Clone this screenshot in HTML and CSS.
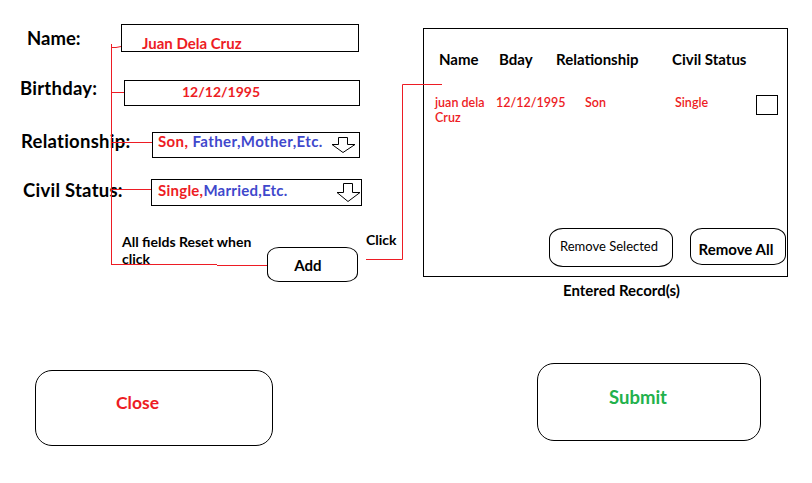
FILE: index.html
```html
<!DOCTYPE html>
<html>
<head>
<meta charset="utf-8">
<link rel="stylesheet" href="styles.css">
</head>
<body>
<div class="canvas">
  <div class="top">
    <div class="form">
      <div class="row row-name">
        <div class="label">Name:</div>
        <div class="field"><span class="red">Juan Dela Cruz</span></div>
      </div>
      <div class="row row-bday">
        <div class="label">Birthday:</div>
        <div class="field"><span class="red">12/12/1995</span></div>
      </div>
      <div class="row row-rel">
        <div class="label">Relationship:</div>
        <div class="field select">
          <span><span class="red">Son,</span> <span class="blue">Father,Mother,Etc.</span></span>
          <svg class="arrow" width="25" height="16" viewBox="0 0 25 16"><path d="M7.5 0.5 H16.5 V7.5 H24 L12 15.5 L1 7.5 H7.5 Z" fill="#fff" stroke="#000" stroke-width="1"/></svg>
        </div>
      </div>
      <div class="row row-civil">
        <div class="label">Civil Status:</div>
        <div class="field select">
          <span><span class="red">Single,</span><span class="blue">Married,Etc.</span></span>
          <svg class="arrow" width="25" height="19" viewBox="0 0 25 19"><path d="M7.5 0.5 H16.5 V9.5 H24 L12 18.5 L1 9.5 H7.5 Z" fill="#fff" stroke="#000" stroke-width="1"/></svg>
        </div>
      </div>
      <div class="action">
        <div class="note">All fields Reset when click</div>
        <div class="btn add">Add</div>
        <div class="click">Click</div>
      </div>
    </div>
    <div class="records-col">
      <div class="records">
        <div class="thead">
          <div class="h h-name">Name</div>
          <div class="h h-bday">Bday</div>
          <div class="h h-rel">Relationship</div>
          <div class="h h-civil">Civil Status</div>
        </div>
        <div class="trow">
          <div class="c c-name">juan dela Cruz</div>
          <div class="c c-bday">12/12/1995</div>
          <div class="c c-rel">Son</div>
          <div class="c c-civil">Single</div>
          <div class="check"></div>
        </div>
        <div class="rbtns">
          <div class="btn rsel">Remove Selected</div>
          <div class="btn rall">Remove All</div>
        </div>
      </div>
      <div class="caption">Entered Record(s)</div>
    </div>
  </div>
  <div class="bottom">
    <div class="bigbtn close">Close</div>
    <div class="bigbtn submit">Submit</div>
  </div>
  <svg class="wires" width="812" height="483" viewBox="0 0 812 483">
    <g stroke="#ed1c24" stroke-width="1" fill="none">
      <path d="M111.5 44 V264.5"/>
      <path d="M111 47.5 H116 L121 46.5"/>
      <path d="M111 92.5 H124"/>
      <path d="M111 142.5 H152"/>
      <path d="M111 189.5 H151"/>
      <path d="M111 264.5 H217 M217 265.5 H267"/>
      <path d="M366 259.5 H402.5 V84.5 H442"/>
    </g>
  </svg>
</div>
</body>
</html>
```
FILE: styles.css
```css
* { box-sizing: border-box; }
html, body { margin: 0; padding: 0; background: #fff; }
body { font-family: Lato, "Open Sans", sans-serif; color: #000; }

.canvas { position: relative; width: 812px; height: 483px; overflow: hidden; }

.red { color: #ed1c24; }
.blue { color: #3f48cc; }

.top { display: flex; align-items: flex-start; height: 299px; }
.form { flex: 0 0 423px; }

.row { display: flex; align-items: flex-start; }
.label { font-size: 18.5px; font-weight: 700; line-height: 22px; letter-spacing: 0.25px; white-space: nowrap; }
.field { border: 1px solid #000; font-weight: 700; line-height: 16px; }

.row-name { margin-top: 24px; }
.row-name .label { margin-left: 27px; width: 94px; margin-top: 3px; letter-spacing: 0; }
.row-name .field { width: 238px; height: 28px; padding: 10px 0 0 20px; font-size: 15px; }

.row-bday { margin-top: 24px; }
.row-bday .label { margin-left: 20px; width: 104px; margin-top: 1px; }
.row-bday .field { margin-top: 4px; width: 236px; height: 26px; padding: 3px 0 0 57px; font-size: 14px; }

.row-rel { margin-top: 23px; }
.row-rel .label { margin-left: 21px; width: 131px; margin-top: 1px; }
.row-rel .field { margin-top: 3px; width: 208px; height: 26px; padding: 0 3px 0 5px; font-size: 15px; letter-spacing: 0.4px; }
.row-rel .arrow { margin-top: 4px; }

.row-civil { margin-top: 20px; }
.row-civil .label { margin-left: 23px; width: 128px; margin-top: 1px; }
.row-civil .field { margin-top: 1px; width: 211px; height: 27px; padding: 2px 0 0 6px; font-size: 15px; letter-spacing: 0.25px; }
.row-civil .arrow { margin-top: 1px; }

.select { display: flex; align-items: flex-start; }
.select .arrow { margin-left: auto; flex: none; }

.action { display: flex; align-items: flex-start; margin-top: 27px; }
.note { margin-left: 122px; width: 145px; font-size: 14px; font-weight: 700; line-height: 17px; }
.btn { border: 1px solid #000; display: flex; justify-content: center; background: #fff; }
.add { margin-top: 14px; width: 91px; height: 35px; border-radius: 12px / 9px; font-size: 15px; font-weight: 700; padding: 8px 9px 0 0; line-height: 18px; }
.click { margin-left: 8px; margin-top: -2px; font-size: 14px; font-weight: 700; line-height: 17px; }

.records-col { flex: 0 0 365px; }
.records { margin-top: 28px; width: 365px; height: 249px; border: 1px solid #000; padding-top: 21px; }
.thead { display: flex; margin-left: 15px; font-size: 15px; font-weight: 700; line-height: 18px; }
.h-name { width: 60px; }
.h-bday { width: 57px; }
.h-rel { width: 116px; }
.trow { display: flex; align-items: flex-start; margin-top: 27px; margin-left: 11px; color: #ed1c24; font-size: 12.5px; font-weight: 600; line-height: 15px; }
.c-name { width: 61px; }
.c-bday { width: 89px; }
.c-rel { width: 90px; }
.c-civil { width: 81px; }
.check { width: 22px; height: 20px; border: 1px solid #000; }
.rbtns { display: flex; align-items: flex-start; margin-top: 103px; margin-left: 125px; gap: 17px; }
.rsel { width: 124px; height: 39px; border-radius: 14px / 11px; font-size: 13px; line-height: 16px; padding: 9px 4px 0 0; }
.rall { width: 96px; height: 37px; border-radius: 12px / 10px; font-size: 15px; font-weight: 700; line-height: 18px; padding: 11px 4px 0 0; }
.caption { margin-top: 4px; margin-left: 140px; font-size: 15px; font-weight: 700; line-height: 18px; }

.bottom { display: flex; align-items: flex-start; margin-top: 64px; }
.bigbtn { border: 1px solid #000; border-radius: 17px; font-weight: 700; }
.close { margin-left: 35px; margin-top: 7px; width: 238px; height: 76px; color: #ed1c24; font-size: 17.5px; line-height: 18px; padding: 23px 0 0 80px; }
.submit { margin-left: 264px; width: 224px; height: 78px; color: #22b14c; font-size: 18.5px; line-height: 19px; padding: 24px 0 0 71px; }

.wires { position: absolute; left: 0; top: 0; pointer-events: none; }
```
